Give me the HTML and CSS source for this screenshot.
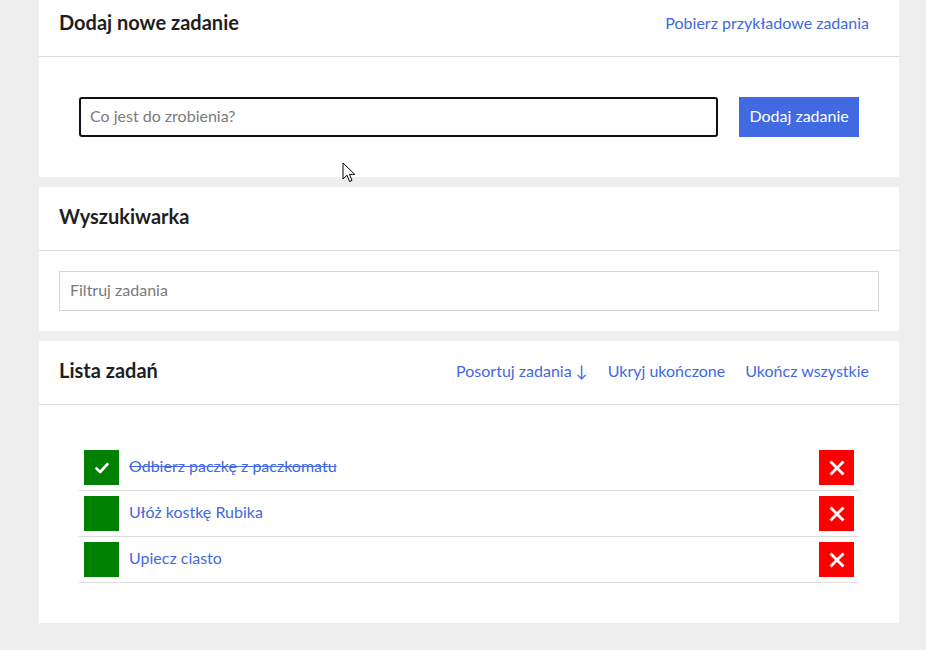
FILE: index.html
```html
<!DOCTYPE html>
<html lang="pl">
<head>
<meta charset="utf-8">
<title>Zadania</title>
<link rel="stylesheet" href="styles.css">
</head>
<body>
<main class="app">
  <section class="card">
    <header class="card-header">
      <h2 class="card-title">Dodaj nowe zadanie</h2>
      <nav class="actions"><a class="link" href="#">Pobierz przykładowe zadania</a></nav>
    </header>
    <div class="card-body body-add">
      <input class="new-input" type="text" placeholder="Co jest do zrobienia?">
      <button class="add-btn" type="button">Dodaj zadanie</button>
    </div>
  </section>

  <section class="card">
    <header class="card-header">
      <h2 class="card-title">Wyszukiwarka</h2>
    </header>
    <div class="card-body body-search">
      <input class="filter-input" type="text" placeholder="Filtruj zadania">
    </div>
  </section>

  <section class="card">
    <header class="card-header">
      <h2 class="card-title">Lista zadań</h2>
      <nav class="actions">
        <a class="link" href="#">Posortuj zadania ↓</a>
        <a class="link" href="#">Ukryj ukończone</a>
        <a class="link" href="#">Ukończ wszystkie</a>
      </nav>
    </header>
    <div class="card-body body-list">
      <ul class="tasks">
        <li class="task">
          <span class="check done"><svg width="16" height="16" viewBox="0 0 16 16"><path d="M2.5 8.5 L6.2 12 L13.5 4" fill="none" stroke="#fff" stroke-width="2.6" stroke-linecap="round" stroke-linejoin="round"/></svg></span>
          <span class="task-name strike">Odbierz paczkę z paczkomatu</span>
          <span class="del"><svg width="16" height="16" viewBox="0 0 16 16"><path d="M2.5 2.5 L13.5 13.5 M13.5 2.5 L2.5 13.5" stroke="#fff" stroke-width="2.8" stroke-linecap="square"/></svg></span>
        </li>
        <li class="task">
          <span class="check"></span>
          <span class="task-name">Ułóż kostkę Rubika</span>
          <span class="del"><svg width="16" height="16" viewBox="0 0 16 16"><path d="M2.5 2.5 L13.5 13.5 M13.5 2.5 L2.5 13.5" stroke="#fff" stroke-width="2.8" stroke-linecap="square"/></svg></span>
        </li>
        <li class="task">
          <span class="check"></span>
          <span class="task-name">Upiecz ciasto</span>
          <span class="del"><svg width="16" height="16" viewBox="0 0 16 16"><path d="M2.5 2.5 L13.5 13.5 M13.5 2.5 L2.5 13.5" stroke="#fff" stroke-width="2.8" stroke-linecap="square"/></svg></span>
        </li>
      </ul>
    </div>
  </section>
</main>
<svg class="cursor" width="14" height="22" viewBox="0 0 14 22"><path d="M1 1 L1 17 L5 13.2 L7.6 19.5 L10 18.5 L7.5 12.4 L12.8 12.4 Z" fill="#fff" stroke="#000" stroke-width="1" stroke-linejoin="round"/></svg>
</body>
</html>
```
FILE: styles.css
```css
* { box-sizing: border-box; }
html, body {
  margin: 0;
  padding: 0;
  background: #eeeeee;
  font-family: Lato, "Open Sans", "Liberation Sans", sans-serif;
  color: #222;
  overflow: hidden;
}
.app {
  width: 860px;
  margin: -7px 0 0 39px;
  display: flex;
  flex-direction: column;
  gap: 10px;
}
.card {
  background: #fff;
}
.card-header {
  height: 64px;
  padding: 0 20px 5px;
  display: flex;
  align-items: center;
  justify-content: space-between;
  border-bottom: 1px solid #dddddd;
}
.card-title {
  margin: 0;
  font-size: 20px;
  font-weight: 700;
  color: #1f1f1f;
}
.actions {
  display: flex;
}
.link {
  padding: 0 10px;
  color: #4169e1;
  text-decoration: none;
  font-size: 16px;
}
.body-add {
  padding: 40px;
  display: flex;
  gap: 21px;
}
.new-input {
  width: 640px;
  height: 40px;
  border: 2px solid #111;
  border-radius: 3px;
  padding: 0 9px 4px;
  font: inherit;
  font-size: 16px;
  outline: none;
}
.new-input::placeholder, .filter-input::placeholder { color: #7a7a7a; }
.add-btn {
  width: 120px;
  height: 40px;
  border: none;
  background: #4169e1;
  color: #fff;
  font: inherit;
  font-size: 16px;
  padding: 0 0 4px;
}
.body-search {
  padding: 20px;
}
.filter-input {
  width: 100%;
  height: 40px;
  border: 1px solid #d6d6d6;
  padding: 0 10px 4px;
  font: inherit;
  font-size: 16px;
  outline: none;
}
.body-list {
  padding: 40px;
}
.tasks {
  list-style: none;
  margin: 0;
  padding: 0;
}
.task {
  display: flex;
  align-items: center;
  gap: 10px;
  padding: 5px;
  border-bottom: 1px solid #dddddd;
}
.check {
  width: 35px;
  height: 35px;
  background: #008000;
  display: flex;
  align-items: center;
  justify-content: center;
  flex: none;
}
.task-name {
  flex: 1;
  color: #4169e1;
  font-size: 16px;
  padding-bottom: 4px;
}
.strike { text-decoration: line-through; }
.del {
  width: 35px;
  height: 35px;
  background: #ff0000;
  display: flex;
  align-items: center;
  justify-content: center;
  flex: none;
}
.cursor {
  position: absolute;
  left: 342px;
  top: 162px;
}
```
